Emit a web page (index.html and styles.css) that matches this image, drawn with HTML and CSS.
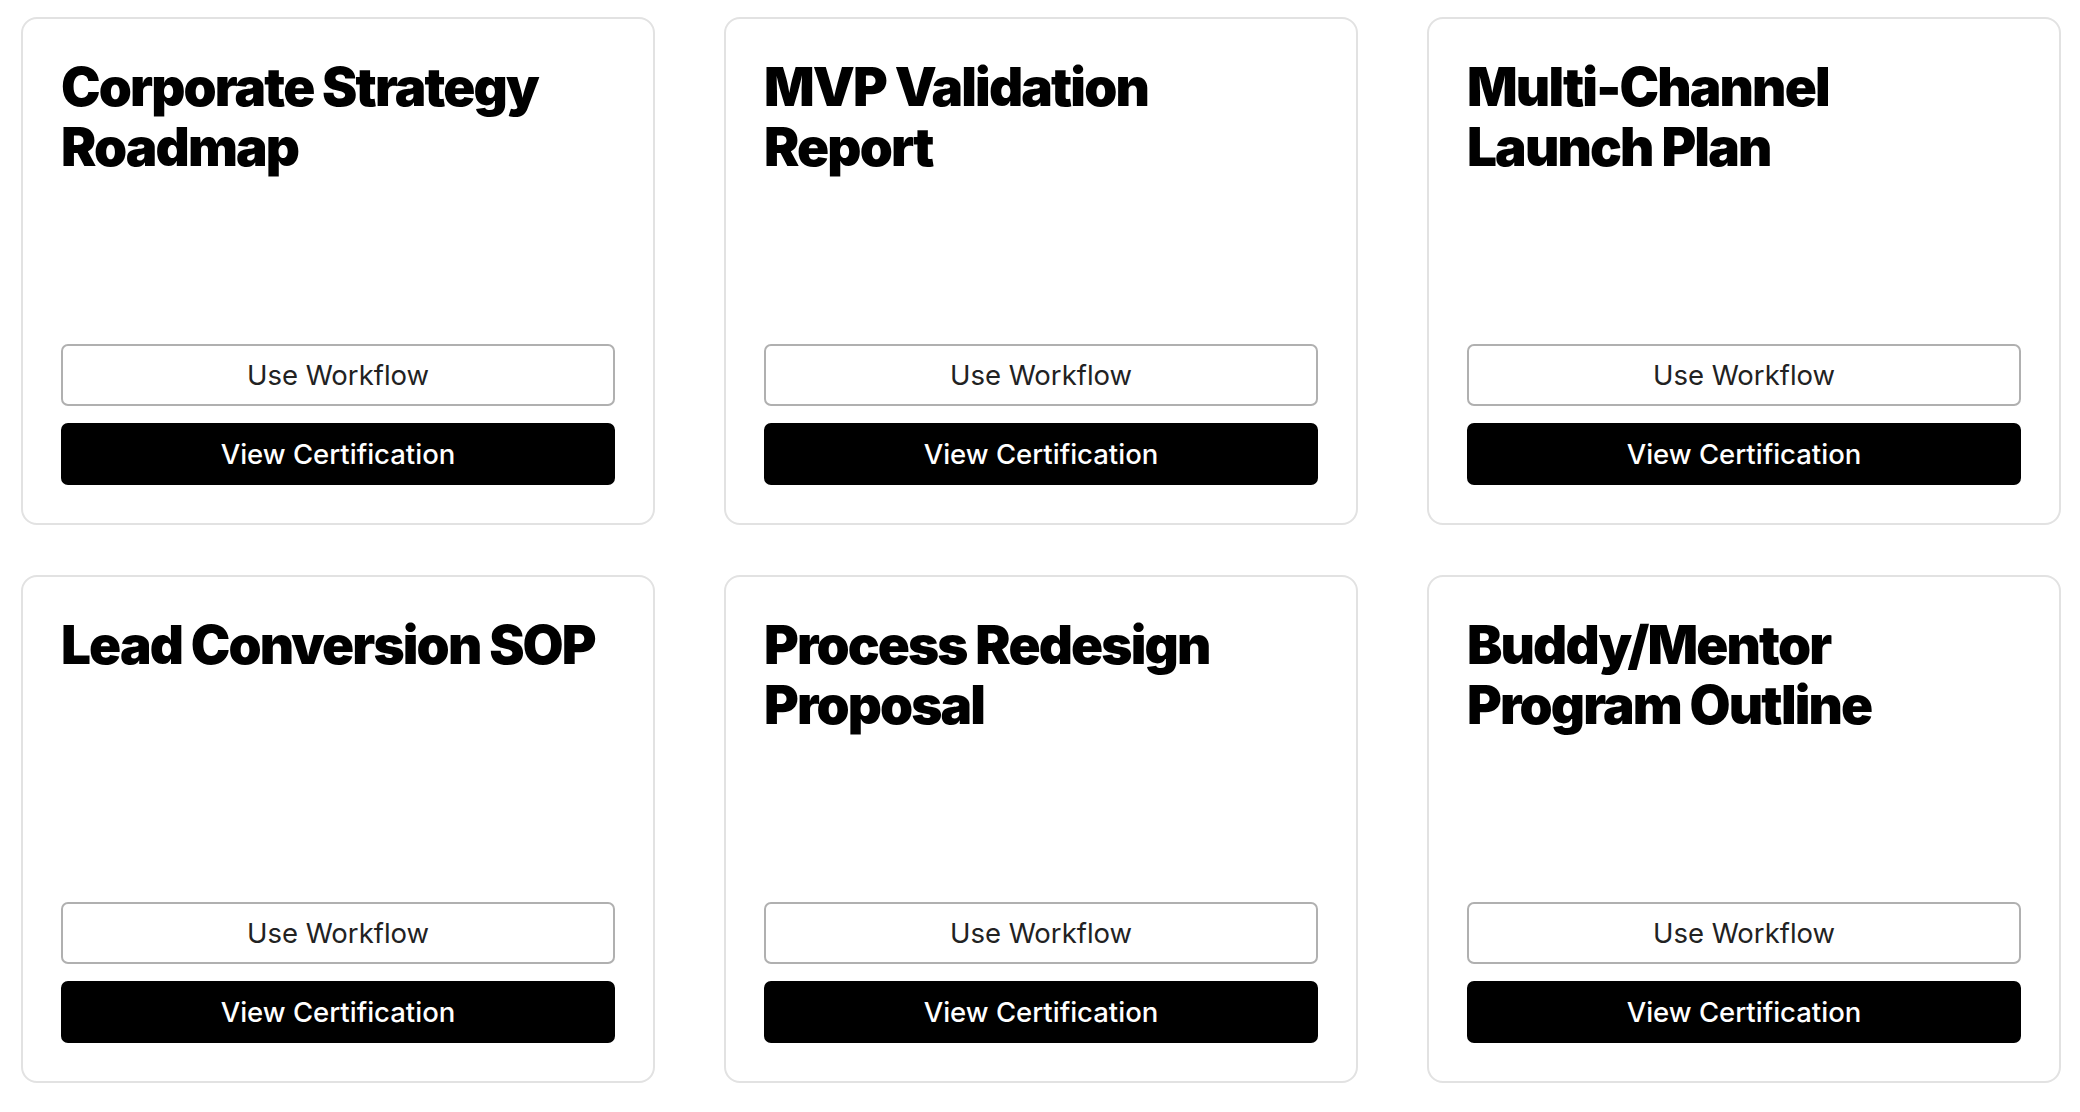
FILE: index.html
```html
<!DOCTYPE html>
<html lang="en">
<head>
<meta charset="utf-8">
<title>Workflows</title>
<link rel="stylesheet" href="styles.css">
</head>
<body>
<main class="grid">
  <article class="card">
    <h2 class="title">Corporate Strategy Roadmap</h2>
    <div class="actions">
      <button class="btn btn-outline">Use Workflow</button>
      <button class="btn btn-dark">View Certification</button>
    </div>
  </article>
  <article class="card">
    <h2 class="title">MVP Validation Report</h2>
    <div class="actions">
      <button class="btn btn-outline">Use Workflow</button>
      <button class="btn btn-dark">View Certification</button>
    </div>
  </article>
  <article class="card">
    <h2 class="title">Multi-Channel Launch Plan</h2>
    <div class="actions">
      <button class="btn btn-outline">Use Workflow</button>
      <button class="btn btn-dark">View Certification</button>
    </div>
  </article>
  <article class="card">
    <h2 class="title">Lead Conversion SOP</h2>
    <div class="actions">
      <button class="btn btn-outline">Use Workflow</button>
      <button class="btn btn-dark">View Certification</button>
    </div>
  </article>
  <article class="card">
    <h2 class="title">Process Redesign Proposal</h2>
    <div class="actions">
      <button class="btn btn-outline">Use Workflow</button>
      <button class="btn btn-dark">View Certification</button>
    </div>
  </article>
  <article class="card">
    <h2 class="title">Buddy/Mentor Program Outline</h2>
    <div class="actions">
      <button class="btn btn-outline">Use Workflow</button>
      <button class="btn btn-dark">View Certification</button>
    </div>
  </article>
</main>
</body>
</html>
```
FILE: styles.css
```css
html, body {
  margin: 0;
  padding: 0;
  background: #ffffff;
}

body {
  font-family: Inter, "Liberation Sans", sans-serif;
  overflow: hidden;
}

.grid {
  display: grid;
  grid-template-columns: repeat(3, 634px);
  column-gap: 69px;
  row-gap: 50px;
  padding: 17px 0 0 21px;
}

.card {
  box-sizing: border-box;
  height: 508px;
  border: 2px solid #e2e2e2;
  border-radius: 16px;
  padding: 38px 38px 38px 38px;
  display: flex;
  flex-direction: column;
  justify-content: space-between;
}

.title {
  margin: 0;
  font-family: Inter, "Liberation Sans", sans-serif;
  font-weight: 900;
  font-size: 53px;
  line-height: 60px;
  letter-spacing: -0.035em;
  color: #000;
}

.actions {
  display: flex;
  flex-direction: column;
  gap: 17px;
}

.btn {
  box-sizing: border-box;
  height: 62px;
  width: 100%;
  border-radius: 7px;
  font-family: Inter, "Liberation Sans", sans-serif;
  font-size: 27.5px;
  cursor: pointer;
}

.btn-outline {
  background: #fff;
  border: 2px solid #b0b0b0;
  color: #222;
  font-weight: 400;
}

.btn-dark {
  background: #000;
  border: 2px solid #000;
  color: #fff;
  font-weight: 500;
}
```
